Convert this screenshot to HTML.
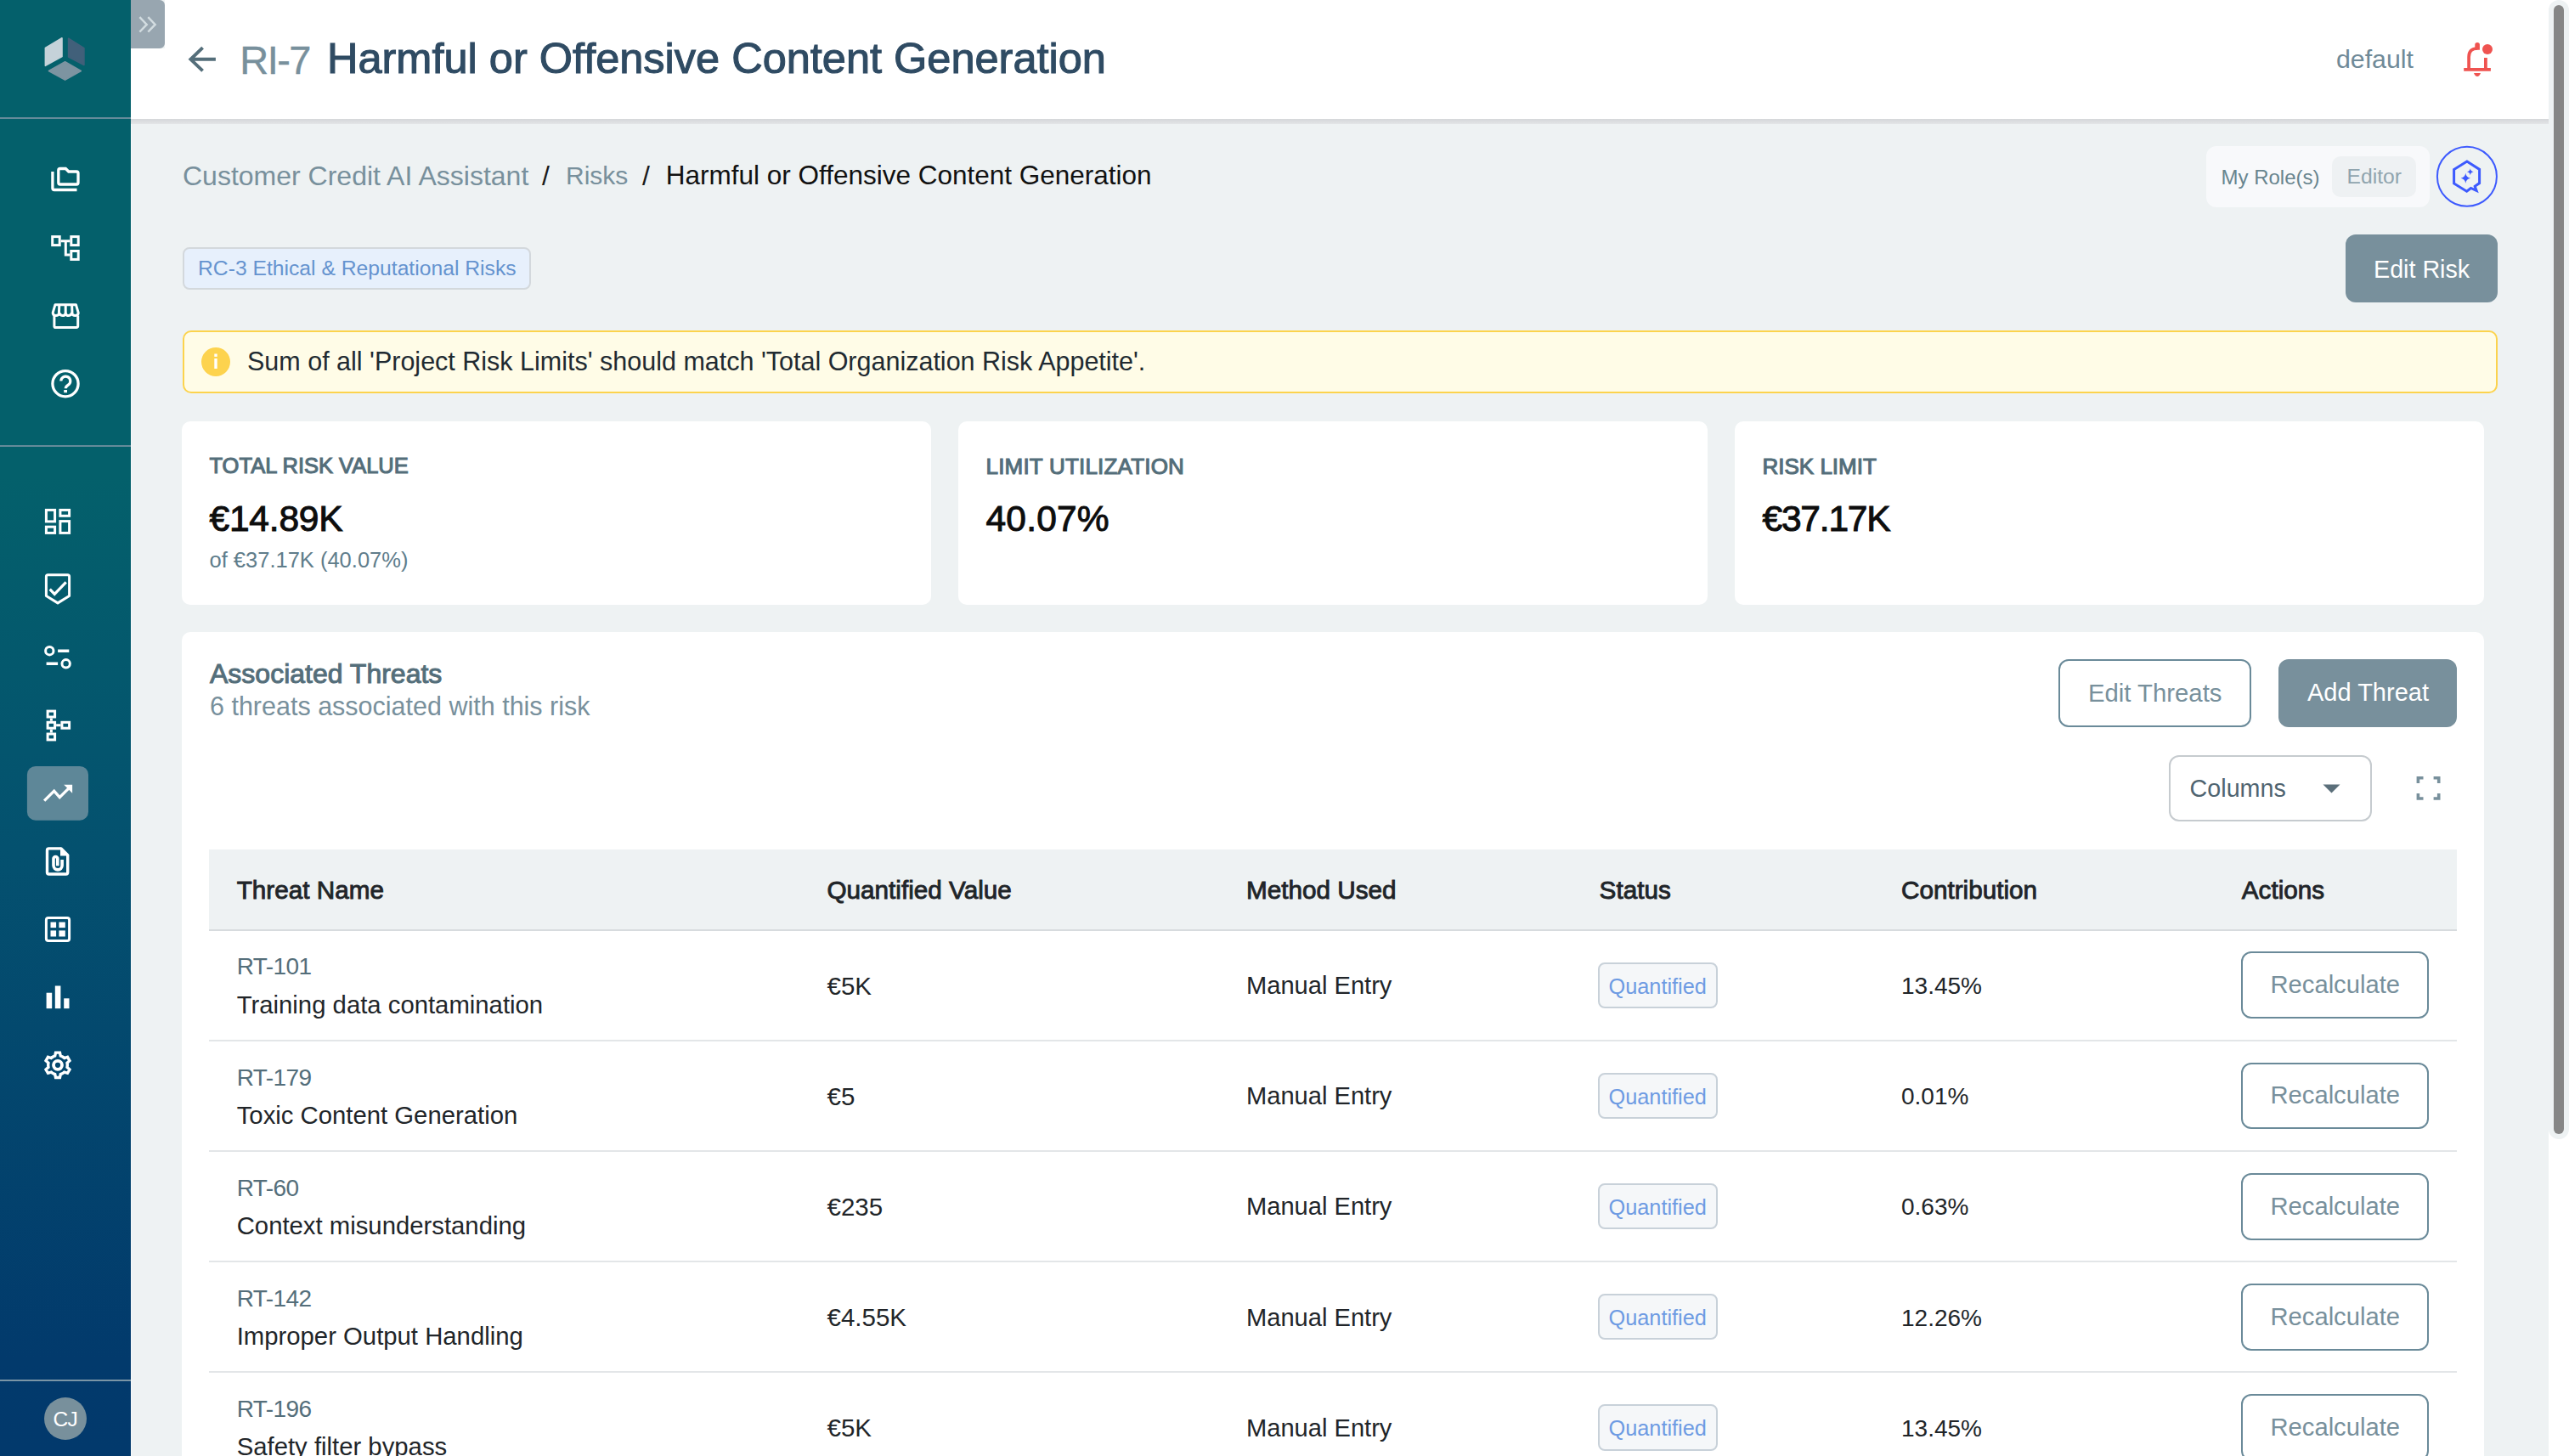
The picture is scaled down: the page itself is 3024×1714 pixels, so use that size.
<!DOCTYPE html>
<html><head><meta charset="utf-8"><title>RI-7 Harmful or Offensive Content Generation</title>
<style>
html,body{margin:0;padding:0;width:3024px;height:1714px;overflow:hidden;background:#eef2f3;font-family:"Liberation Sans",sans-serif;}
.a{position:absolute;}
.t{position:absolute;white-space:nowrap;line-height:1;}
@media (max-width:2000px){html{zoom:0.5;}}
</style></head><body>
<div class="a" style="left:0.0px;top:0.0px;width:154.0px;height:1714.0px;background:linear-gradient(180deg,#04606b 0px,#04606b 560px,#04516f 1000px,#023a6c 1600px,#02396c 1714px);"></div>
<div class="a" style="left:0.0px;top:138.0px;width:154.0px;height:2.0px;background:#658b9a;"></div>
<div class="a" style="left:0.0px;top:524.0px;width:154.0px;height:2.0px;background:#658b9a;"></div>
<div class="a" style="left:0.0px;top:1624.0px;width:154.0px;height:1.7px;background:#7a95a6;"></div>
<div class="a" style="left:154.0px;top:139.0px;width:1.0px;height:1575.0px;background:#f7f9fa;"></div>
<svg class="a" style="left:0;top:0" width="200" height="1714" viewBox="0 0 200 1714">
<polygon points="53.4,56.4 73,44.8 73,66.6 53.4,77.3" fill="#c5d2d9" stroke="#c5d2d9" stroke-width="1.6" stroke-linejoin="round"/>
<polygon points="80.6,45.2 98.9,56.7 98.9,76.5 80.6,67" fill="#41607a" stroke="#41607a" stroke-width="1.6" stroke-linejoin="round"/>
<polygon points="57.4,83.5 76.6,72.8 95.3,83.5 76.6,94.1" fill="#7d94a1" stroke="#7d94a1" stroke-width="1.6" stroke-linejoin="round"/>
<path d="M154 0 H188 a6 6 0 0 1 6 6 V50.9 a6 6 0 0 1 -6 6 H154 Z" fill="#98a6b0"/>
<path d="M164.4 20.2 L172.7 28.9 L164.4 37.5 M174.3 20.2 L182.6 28.9 L174.3 37.5" stroke="#d2dce0" stroke-width="2.5" fill="none"/>
<g stroke="#fff" fill="none" stroke-width="3.3">
<path d="M61.9 202 V221.5 a2 2 0 0 0 2 2 H90.5"/>
<path d="M70.8 198.5 H77.3 L80.8 202 H90 a2 2 0 0 1 2 2 V215 a2 2 0 0 1 -2 2 H70.8 a2 2 0 0 1 -2 -2 V200.5 a2 2 0 0 1 2 -2 Z"/>
</g>
<g stroke="#fff" fill="none" stroke-width="3">
<rect x="61.7" y="278.6" width="8.5" height="10"/>
<rect x="83.8" y="278.6" width="8.4" height="10"/>
<rect x="83.8" y="295.5" width="8.4" height="9.9"/>
<path d="M71.7 283.7 H82.3 M77.3 283.7 V300 H82.3"/>
</g>
<g stroke="#fff" fill="none" stroke-width="3" stroke-linejoin="round">
<path d="M65 358.7 H89.4 L92.2 368.2 Q92.2 371.3 88.8 371.4 Q85.3 371.5 84.5 368.8 Q83 371.6 80.7 371.6 Q78 371.6 77.2 368.8 Q76.4 371.6 73.7 371.6 Q71.4 371.6 69.9 368.8 Q69.1 371.5 65.6 371.4 Q62.2 371.3 62.2 368.2 Z"/>
<path d="M69.8 358.7 L69.4 368.8 M77.2 358.7 V368.8 M84.6 358.7 L85 368.8"/>
<path d="M63.9 371.5 V383.9 a1.6 1.6 0 0 0 1.6 1.6 H90.1 a1.6 1.6 0 0 0 1.6 -1.6 V371.5"/>
</g>
<circle cx="77" cy="451.7" r="15.1" stroke="#fff" fill="none" stroke-width="3.3"/>
<path d="M71.8 448.6 A5.5 5.5 0 1 1 80.3 453.2 Q77.3 455.2 77.3 457.2" stroke="#fff" fill="none" stroke-width="3.2"/>
<rect x="75.2" y="459" width="3.8" height="3.2" fill="#fff"/>
<g stroke="#fff" fill="none" stroke-width="3">
<rect x="54.4" y="600.4" width="10.2" height="13.5"/>
<rect x="70.9" y="600.4" width="10.7" height="6.9"/>
<rect x="54.4" y="620.2" width="10.2" height="7.2"/>
<rect x="70.9" y="613.6" width="10.7" height="13.8"/>
</g>
<path d="M56.4 676.7 H79.6 a2 2 0 0 1 2 2 V701.5 L68 709.9 L54.4 701.5 V678.7 a2 2 0 0 1 2 -2 Z" stroke="#fff" fill="none" stroke-width="3" stroke-linejoin="round"/>
<path d="M58.7 693.7 L64.2 699.4 L77.7 685.4" stroke="#fff" fill="none" stroke-width="3.2"/>
<circle cx="58.3" cy="766.2" r="4.7" stroke="#fff" fill="none" stroke-width="3"/>
<circle cx="77.65" cy="781.3" r="4.7" stroke="#fff" fill="none" stroke-width="3"/>
<path d="M68.1 766.2 H81.3 M54.6 781.3 H68.1" stroke="#fff" fill="none" stroke-width="3.5"/>
<g stroke="#fff" fill="none" stroke-width="3">
<rect x="56.1" y="837.1" width="8.5" height="6.9"/>
<rect x="56.1" y="850.3" width="8.5" height="6.9"/>
<rect x="56.1" y="864" width="8.5" height="6.9"/>
<rect x="72.9" y="850.3" width="8.7" height="6.9"/>
<path d="M60.4 845.5 V848.8 M60.4 858.7 V862.5 M66.1 853.8 H71.4"/>
</g>
<rect x="31.9" y="901.9" width="72.1" height="63.9" rx="10" fill="#5e8798"/>
<path d="M52.1 942.7 L63.7 931.2 L70.2 938.6 L80.5 928.3" stroke="#fff" fill="none" stroke-width="3.3"/>
<polygon points="75.2,923.8 85.1,923.8 85.1,933.7" fill="#fff"/>
<path d="M57.5 998.9 H72 L79.7 1006.6 V1027 a2 2 0 0 1 -2 2 H57.5 a2 2 0 0 1 -2 -2 V1000.9 a2 2 0 0 1 2 -2 Z" stroke="#fff" fill="none" stroke-width="3.4" stroke-linejoin="round"/>
<polygon points="71,997.2 81.4,1007.6 71,1007.6" fill="#fff"/>
<path d="M67.8 1019.2 V1010.85 A2.4 2.4 0 0 0 63 1010.85 V1018.8 A5.05 5.05 0 0 0 73.1 1018.8 V1012" stroke="#fff" fill="none" stroke-width="3.6"/>
<rect x="54.4" y="1080.4" width="27.2" height="27" rx="2.5" stroke="#fff" fill="none" stroke-width="3"/>
<g fill="#fff">
<rect x="59.5" y="1085.5" width="6.6" height="6.6"/><rect x="69.4" y="1085.5" width="7.4" height="6.6"/>
<rect x="59.5" y="1095.4" width="6.6" height="7.1"/><rect x="69.4" y="1095.4" width="7.4" height="7.1"/>
<rect x="54.6" y="1168.7" width="6.6" height="18.5"/><rect x="64.8" y="1160.5" width="6.6" height="26.7"/><rect x="75.2" y="1175.3" width="6.3" height="11.9"/>
</g>
<path d="M64.70 1242.99 L65.54 1239.10 L70.46 1239.10 L71.30 1242.99 L72.51 1243.44 L73.65 1244.01 L74.72 1244.72 L75.71 1245.54 L79.50 1244.32 L81.96 1248.58 L79.01 1251.26 L79.23 1252.52 L79.30 1253.80 L79.23 1255.08 L79.01 1256.34 L81.96 1259.02 L79.50 1263.28 L75.71 1262.06 L74.72 1262.88 L73.65 1263.59 L72.51 1264.16 L71.30 1264.61 L70.46 1268.50 L65.54 1268.50 L64.70 1264.61 L63.49 1264.16 L62.35 1263.59 L61.28 1262.88 L60.29 1262.06 L56.50 1263.28 L54.04 1259.02 L56.99 1256.34 L56.77 1255.08 L56.70 1253.80 L56.77 1252.52 L56.99 1251.26 L54.04 1248.58 L56.50 1244.32 L60.29 1245.54 L61.28 1244.72 L62.35 1244.01 L63.49 1243.44 Z" stroke="#fff" fill="none" stroke-width="3.4" stroke-linejoin="miter"/>
<circle cx="68" cy="1253.8" r="5" stroke="#fff" fill="none" stroke-width="3.8"/>
<circle cx="77" cy="1670" r="25" fill="#78909c"/>
</svg>
<div class="t" style="left:62.6px;top:1659.3px;font-size:24.5px;color:#fff;letter-spacing:-0.8px;">CJ</div>
<div class="a" style="left:194.0px;top:0.0px;width:2806.0px;height:140.0px;background:#fff;"></div>
<div class="a" style="left:154.0px;top:56.9px;width:40.0px;height:83.1px;background:#fff;"></div>
<div class="a" style="left:154.0px;top:140.0px;width:2846.0px;height:6.3px;background:linear-gradient(180deg,#d5d7da,#dcdee0 50%,#e3e5e7);"></div>
<svg class="a" style="left:215px;top:50px" width="45" height="40" viewBox="215 50 45 40">
<path d="M238.6 56.2 L224.4 69.8 L238.6 83.4 M224.4 69.8 H253.9" stroke="#546e7a" stroke-width="3.9" fill="none"/>
</svg>
<div class="t" style="left:282.2px;top:46.9px;font-size:47px;color:#78909c;letter-spacing:-1.5px;-webkit-text-stroke:0.4px #78909c;">RI-7</div>
<div class="t" style="left:385.0px;top:43.9px;font-size:50.5px;color:#2f4b63;-webkit-text-stroke:1.1px #2f4b63;">Harmful or Offensive Content Generation</div>
<div class="t" style="left:2750.0px;top:54.5px;font-size:30.3px;color:#6f8a98;">default</div>
<svg class="a" style="left:2890px;top:40px" width="50" height="55" viewBox="2890 40 50 55">
<path d="M2906.1 81.5 V67 Q2906.1 57 2916.3 57" stroke="#ef5350" stroke-width="3.7" fill="none"/>
<path d="M2900.2 81.9 H2931.9 M2925.9 68 V81.9" stroke="#ef5350" stroke-width="3.8" fill="none"/>
<path d="M2913.3 52.8 Q2913.3 50 2916.1 50 Q2918.9 50 2918.9 52.8 V58.7 H2913.3 Z" fill="#ef5350"/>
<path d="M2912 86 H2920 Q2918.5 90 2916 90 Q2913.5 90 2912 86 Z" fill="#ef5350"/>
<circle cx="2928" cy="57.9" r="6" fill="#ef5350"/>
</svg>
<div class="a" style="left:3000.0px;top:0.0px;width:24.0px;height:1714.0px;background:#fff;"></div>
<div class="a" style="left:3000.0px;top:0.0px;width:24.0px;height:1341.0px;background:#eef2f3;border-radius:12px;"></div>
<div class="a" style="left:3006.0px;top:5.5px;width:12.0px;height:1329.0px;background:#868686;border-radius:6px;"></div>
<div class="t" style="left:215.0px;top:190.6px;font-size:32px;color:#78909c;">Customer Credit AI Assistant</div>
<div class="t" style="left:638.0px;top:190.6px;font-size:32px;color:#1a1a1a;">/</div>
<div class="t" style="left:666.0px;top:192.3px;font-size:30px;color:#78909c;">Risks</div>
<div class="t" style="left:756.0px;top:190.6px;font-size:32px;color:#1a1a1a;">/</div>
<div class="t" style="left:783.7px;top:191.0px;font-size:31.5px;color:#111;">Harmful or Offensive Content Generation</div>
<div class="a" style="left:2597.0px;top:171.7px;width:263.3px;height:72.1px;background:#f8f9fb;border-radius:12px;"></div>
<div class="t" style="left:2614.5px;top:196.9px;font-size:24px;color:#68858f;">My Role(s)</div>
<div class="a" style="left:2745.0px;top:184.0px;width:99.0px;height:47.8px;background:#eef1f3;border-radius:10px;"></div>
<div class="t" style="left:2762.5px;top:196.3px;font-size:24.7px;color:#90a4ae;">Editor</div>
<svg class="a" style="left:2860px;top:160px" width="90" height="90" viewBox="2860 160 90 90">
<circle cx="2903.9" cy="207.7" r="35" stroke="#3d5afe" stroke-width="2" fill="none"/>
<path d="M2903.9 190.1 L2918.6 199.4 V215.6 L2913.2 219.3 L2915.1 224.4 L2908.5 221.5 L2903.6 225.3 L2888.6 216 V199.6 Z" stroke="#3d5afe" stroke-width="3" fill="none" stroke-linejoin="miter"/>
<path d="M2902.3 203.8 Q2902.9 208.9 2908 209.7 Q2902.9 210.6 2902.3 215.7 Q2901.6 210.6 2896.6 209.7 Q2901.6 208.9 2902.3 203.8 Z" fill="#3d5afe"/>
<path d="M2907.8 198.3 Q2908.2 201.9 2911.7 202.3 Q2908.2 202.8 2907.8 206.2 Q2907.3 202.8 2903.9 202.3 Q2907.3 201.9 2907.8 198.3 Z" fill="#3d5afe"/>
</svg>
<div class="a" style="left:214.5px;top:290.8px;width:410.5px;height:50.2px;background:#e7f0fc;border:2px solid #d3d8dc;border-radius:8px;box-sizing:border-box;"></div>
<div class="t" style="left:233.0px;top:304.1px;font-size:24.7px;color:#6593cf;">RC-3 Ethical &amp; Reputational Risks</div>
<div class="a" style="left:2761.0px;top:276.0px;width:179.0px;height:80.0px;background:#78909c;border-radius:12px;"></div>
<div class="t" style="left:2794.0px;top:303.2px;font-size:28.7px;color:#fff;">Edit Risk</div>
<div class="a" style="left:214.5px;top:388.6px;width:2725.5px;height:74.4px;background:#fffce7;border:2px solid #fcd34d;border-radius:10px;box-sizing:border-box;"></div>
<svg class="a" style="left:230px;top:402px" width="50" height="50" viewBox="230 402 50 50">
<circle cx="254" cy="426" r="17" fill="#fdd34e"/>
<rect x="252.3" y="422" width="3.4" height="12" fill="#fff"/>
<rect x="252.3" y="416.5" width="3.4" height="3.4" fill="#fff"/>
</svg>
<div class="t" style="left:291.0px;top:410.2px;font-size:30.5px;color:#212a31;">Sum of all 'Project Risk Limits' should match 'Total Organization Risk Appetite'.</div>
<div class="a" style="left:214.0px;top:496.0px;width:882.0px;height:216.0px;background:#fff;border-radius:10px;"></div>
<div class="t" style="left:246.5px;top:536.0px;font-size:25.5px;color:#546e7a;-webkit-text-stroke:1.1px #546e7a;">TOTAL RISK VALUE</div>
<div class="t" style="left:246.5px;top:590.0px;font-size:42.5px;color:#0d0d0d;letter-spacing:-0.2px;-webkit-text-stroke:1.0px #0d0d0d;">€14.89K</div>
<div class="t" style="left:246.5px;top:647.4px;font-size:25.5px;color:#607d8b;">of €37.17K (40.07%)</div>
<div class="a" style="left:1128.0px;top:496.0px;width:882.0px;height:216.0px;background:#fff;border-radius:10px;"></div>
<div class="t" style="left:1160.5px;top:535.6px;font-size:26px;color:#546e7a;letter-spacing:0.2px;-webkit-text-stroke:1.1px #546e7a;">LIMIT UTILIZATION</div>
<div class="t" style="left:1160.5px;top:590.0px;font-size:42.5px;color:#0d0d0d;letter-spacing:0.2px;-webkit-text-stroke:1.0px #0d0d0d;">40.07%</div>
<div class="a" style="left:2042.0px;top:496.0px;width:882.0px;height:216.0px;background:#fff;border-radius:10px;"></div>
<div class="t" style="left:2074.5px;top:535.6px;font-size:26px;color:#546e7a;-webkit-text-stroke:1.1px #546e7a;">RISK LIMIT</div>
<div class="t" style="left:2074.5px;top:590.0px;font-size:42.5px;color:#0d0d0d;letter-spacing:-1.2px;-webkit-text-stroke:1.0px #0d0d0d;">€37.17K</div>
<div class="a" style="left:214.0px;top:744.0px;width:2710.0px;height:1016.0px;background:#fff;border-radius:10px;"></div>
<div class="t" style="left:247.0px;top:776.9px;font-size:32px;color:#546e7a;-webkit-text-stroke:1.0px #546e7a;">Associated Threats</div>
<div class="t" style="left:247.0px;top:815.9px;font-size:30.5px;color:#78909c;">6 threats associated with this risk</div>
<div class="a" style="left:2423.0px;top:776.0px;width:227.0px;height:80.0px;border:2px solid #6a8a99;border-radius:12px;box-sizing:border-box;"></div>
<div class="t" style="left:2458.0px;top:801.2px;font-size:29.3px;color:#78909c;">Edit Threats</div>
<div class="a" style="left:2682.0px;top:776.0px;width:210.0px;height:80.0px;background:#78909c;border-radius:12px;"></div>
<div class="t" style="left:2716.0px;top:801.4px;font-size:29px;color:#fff;">Add Threat</div>
<div class="a" style="left:2553.4px;top:888.7px;width:239.0px;height:78.3px;border:2px solid #c6cbcf;border-radius:12px;box-sizing:border-box;"></div>
<div class="t" style="left:2577.6px;top:913.7px;font-size:28.7px;color:#4f6470;">Columns</div>
<svg class="a" style="left:2720px;top:900px" width="170" height="60" viewBox="2720 900 170 60">
<polygon points="2734.5,923.5 2754.5,923.5 2744.5,933.6" fill="#5b6f7a"/>
<path d="M2846.4 922 V915.8 H2852.5 M2864.6 915.8 H2870.7 V922 M2870.7 934 V940 H2864.6 M2852.5 940 H2846.4 V934" stroke="#78909c" stroke-width="3.6" fill="none"/>
</svg>
<div class="a" style="left:246.0px;top:1000.0px;width:2646.0px;height:94.5px;background:#eef2f3;"></div>
<div class="a" style="left:246.0px;top:1094.0px;width:2646.0px;height:2.0px;background:#d7dbde;"></div>
<div class="t" style="left:278.7px;top:1032.7px;font-size:29.7px;color:#1f2529;-webkit-text-stroke:0.9px #1f2529;">Threat Name</div>
<div class="t" style="left:973.5px;top:1032.7px;font-size:29.7px;color:#1f2529;-webkit-text-stroke:0.9px #1f2529;">Quantified Value</div>
<div class="t" style="left:1467.0px;top:1032.7px;font-size:29.7px;color:#1f2529;-webkit-text-stroke:0.9px #1f2529;">Method Used</div>
<div class="t" style="left:1882.6px;top:1032.7px;font-size:29.7px;color:#1f2529;-webkit-text-stroke:0.9px #1f2529;">Status</div>
<div class="t" style="left:2238.0px;top:1032.7px;font-size:29.7px;color:#1f2529;-webkit-text-stroke:0.9px #1f2529;">Contribution</div>
<div class="t" style="left:2638.8px;top:1032.7px;font-size:29.7px;color:#1f2529;-webkit-text-stroke:0.9px #1f2529;">Actions</div>
<div class="t" style="left:278.7px;top:1124.3px;font-size:28px;color:#546e7a;letter-spacing:-0.6px;">RT-101</div>
<div class="t" style="left:278.7px;top:1167.7px;font-size:29.3px;color:#212529;">Training data contamination</div>
<div class="t" style="left:973.5px;top:1145.7px;font-size:29.5px;color:#212529;">€5K</div>
<div class="t" style="left:1467.0px;top:1146.1px;font-size:29.1px;color:#212529;">Manual Entry</div>
<div class="a" style="left:1881.0px;top:1132.6px;width:141.0px;height:54.4px;background:#f5f7f9;border:2px solid #c8d1d9;border-radius:8px;box-sizing:border-box;"></div>
<div class="t" style="left:1893.5px;top:1148.6px;font-size:25.3px;color:#6d9be3;">Quantified</div>
<div class="t" style="left:2238.0px;top:1147.0px;font-size:28px;color:#212529;">13.45%</div>
<div class="a" style="left:2637.5px;top:1120.4px;width:221.5px;height:78.9px;border:2px solid #6a8a99;border-radius:12px;box-sizing:border-box;"></div>
<div class="t" style="left:2672.5px;top:1145.3px;font-size:29.2px;color:#78909c;">Recalculate</div>
<div class="a" style="left:246.0px;top:1223.5px;width:2646.0px;height:2.0px;background:#e3e6e8;"></div>
<div class="t" style="left:278.7px;top:1254.5px;font-size:28px;color:#546e7a;letter-spacing:-0.6px;">RT-179</div>
<div class="t" style="left:278.7px;top:1297.9px;font-size:29.3px;color:#212529;">Toxic Content Generation</div>
<div class="t" style="left:973.5px;top:1275.9px;font-size:29.5px;color:#212529;">€5</div>
<div class="t" style="left:1467.0px;top:1276.2px;font-size:29.1px;color:#212529;">Manual Entry</div>
<div class="a" style="left:1881.0px;top:1262.8px;width:141.0px;height:54.4px;background:#f5f7f9;border:2px solid #c8d1d9;border-radius:8px;box-sizing:border-box;"></div>
<div class="t" style="left:1893.5px;top:1278.7px;font-size:25.3px;color:#6d9be3;">Quantified</div>
<div class="t" style="left:2238.0px;top:1277.2px;font-size:28px;color:#212529;">0.01%</div>
<div class="a" style="left:2637.5px;top:1250.6px;width:221.5px;height:78.9px;border:2px solid #6a8a99;border-radius:12px;box-sizing:border-box;"></div>
<div class="t" style="left:2672.5px;top:1275.4px;font-size:29.2px;color:#78909c;">Recalculate</div>
<div class="a" style="left:246.0px;top:1353.7px;width:2646.0px;height:2.0px;background:#e3e6e8;"></div>
<div class="t" style="left:278.7px;top:1384.6px;font-size:28px;color:#546e7a;letter-spacing:-0.6px;">RT-60</div>
<div class="t" style="left:278.7px;top:1428.0px;font-size:29.3px;color:#212529;">Context misunderstanding</div>
<div class="t" style="left:973.5px;top:1406.1px;font-size:29.5px;color:#212529;">€235</div>
<div class="t" style="left:1467.0px;top:1406.4px;font-size:29.1px;color:#212529;">Manual Entry</div>
<div class="a" style="left:1881.0px;top:1392.9px;width:141.0px;height:54.4px;background:#f5f7f9;border:2px solid #c8d1d9;border-radius:8px;box-sizing:border-box;"></div>
<div class="t" style="left:1893.5px;top:1408.9px;font-size:25.3px;color:#6d9be3;">Quantified</div>
<div class="t" style="left:2238.0px;top:1407.3px;font-size:28px;color:#212529;">0.63%</div>
<div class="a" style="left:2637.5px;top:1380.7px;width:221.5px;height:78.9px;border:2px solid #6a8a99;border-radius:12px;box-sizing:border-box;"></div>
<div class="t" style="left:2672.5px;top:1405.6px;font-size:29.2px;color:#78909c;">Recalculate</div>
<div class="a" style="left:246.0px;top:1483.8px;width:2646.0px;height:2.0px;background:#e3e6e8;"></div>
<div class="t" style="left:278.7px;top:1514.8px;font-size:28px;color:#546e7a;letter-spacing:-0.6px;">RT-142</div>
<div class="t" style="left:278.7px;top:1558.2px;font-size:29.3px;color:#212529;">Improper Output Handling</div>
<div class="t" style="left:973.5px;top:1536.2px;font-size:29.5px;color:#212529;">€4.55K</div>
<div class="t" style="left:1467.0px;top:1536.6px;font-size:29.1px;color:#212529;">Manual Entry</div>
<div class="a" style="left:1881.0px;top:1523.1px;width:141.0px;height:54.4px;background:#f5f7f9;border:2px solid #c8d1d9;border-radius:8px;box-sizing:border-box;"></div>
<div class="t" style="left:1893.5px;top:1539.1px;font-size:25.3px;color:#6d9be3;">Quantified</div>
<div class="t" style="left:2238.0px;top:1537.5px;font-size:28px;color:#212529;">12.26%</div>
<div class="a" style="left:2637.5px;top:1510.9px;width:221.5px;height:78.9px;border:2px solid #6a8a99;border-radius:12px;box-sizing:border-box;"></div>
<div class="t" style="left:2672.5px;top:1535.8px;font-size:29.2px;color:#78909c;">Recalculate</div>
<div class="a" style="left:246.0px;top:1614.0px;width:2646.0px;height:2.0px;background:#e3e6e8;"></div>
<div class="t" style="left:278.7px;top:1645.0px;font-size:28px;color:#546e7a;letter-spacing:-0.6px;">RT-196</div>
<div class="t" style="left:278.7px;top:1688.4px;font-size:29.3px;color:#212529;">Safety filter bypass</div>
<div class="t" style="left:973.5px;top:1666.4px;font-size:29.5px;color:#212529;">€5K</div>
<div class="t" style="left:1467.0px;top:1666.7px;font-size:29.1px;color:#212529;">Manual Entry</div>
<div class="a" style="left:1881.0px;top:1653.3px;width:141.0px;height:54.4px;background:#f5f7f9;border:2px solid #c8d1d9;border-radius:8px;box-sizing:border-box;"></div>
<div class="t" style="left:1893.5px;top:1669.3px;font-size:25.3px;color:#6d9be3;">Quantified</div>
<div class="t" style="left:2238.0px;top:1667.7px;font-size:28px;color:#212529;">13.45%</div>
<div class="a" style="left:2637.5px;top:1641.1px;width:221.5px;height:78.9px;border:2px solid #6a8a99;border-radius:12px;box-sizing:border-box;"></div>
<div class="t" style="left:2672.5px;top:1666.0px;font-size:29.2px;color:#78909c;">Recalculate</div>
</body></html>
